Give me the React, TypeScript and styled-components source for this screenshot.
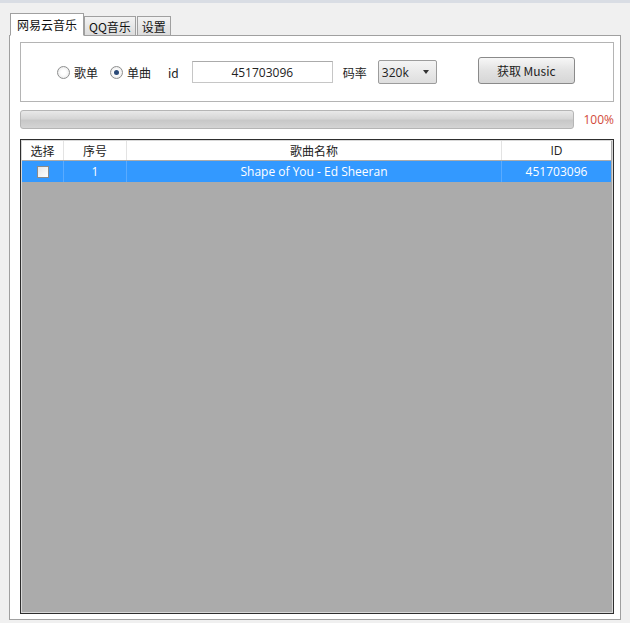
import React from 'react';
import styled, { createGlobalStyle } from 'styled-components';

const GlobalStyle = createGlobalStyle`
  html, body {
    margin: 0;
    padding: 0;
    background: #f0f0f0;
  }
  body {
    font-family: "Noto Sans CJK SC", "Noto Sans", sans-serif;
    font-size: 12px;
    color: #222;
  }
`;

const Window = styled.div`
  height: 623px;
  box-sizing: border-box;
  border-top: 3px solid #d9dde4;
  padding: 10px 9px 3px 9px;
  display: flex;
  flex-direction: column;
`;

const TabStrip = styled.div`
  display: flex;
  align-items: flex-end;
  height: 23px;
  padding-left: 1px;
  margin-bottom: -1px;
  position: relative;
  z-index: 1;
`;

const Tab = styled.div<{ $active?: boolean }>`
  box-sizing: border-box;
  height: ${p => (p.$active ? '23px' : '20px')};
  padding: 0 ${p => (p.$active ? '6px' : '4px')};
  margin-right: ${p => (p.$active ? '0' : '1px')};
  border: 1px solid #a0a0a0;
  border-bottom: ${p => (p.$active ? '1px solid #fff' : '1px solid #a0a0a0')};
  background: ${p => (p.$active ? '#fff' : 'linear-gradient(#f3f3f3, #dcdcdc)')};
  display: flex;
  align-items: center;
  font-size: 12px;
  color: #111;
`;

const Panel = styled.div`
  flex: 1;
  background: #fff;
  border: 1px solid #a0a0a0;
  padding: 6px 6px 5px 10px;
  display: flex;
  flex-direction: column;
`;

const GroupBox = styled.div`
  height: 60px;
  box-sizing: border-box;
  border: 1px solid #b4b4b4;
  display: flex;
  align-items: center;
  padding-left: 36px;
`;

const Radio = styled.span<{ $checked?: boolean }>`
  width: 11px;
  height: 11px;
  border-radius: 50%;
  border: 1px solid #8e8f8f;
  background: radial-gradient(circle, #fff 30%, #e2e2e2 100%);
  display: inline-flex;
  align-items: center;
  justify-content: center;
  margin-right: 4px;
  &::after {
    content: '';
    display: ${p => (p.$checked ? 'block' : 'none')};
    width: 5px;
    height: 5px;
    border-radius: 50%;
    background: #2b4a78;
  }
`;

const Label = styled.span<{ $gap?: number }>`
  margin-right: ${p => p.$gap ?? 0}px;
  color: #222;
`;

const TextBox = styled.div`
  width: 141px;
  height: 22px;
  box-sizing: border-box;
  border: 1px solid #c6c6c6;
  border-top-color: #ababab;
  display: flex;
  align-items: center;
  justify-content: center;
  font-family: "Open Sans", "Noto Sans", sans-serif;
  font-size: 12px;
  margin-right: 10px;
`;

const Select = styled.div`
  width: 59px;
  height: 24px;
  box-sizing: border-box;
  border: 1px solid #9c9c9c;
  border-radius: 2px;
  background: linear-gradient(#f4f4f4, #dedede);
  display: flex;
  align-items: center;
  justify-content: space-between;
  padding: 0 7px 0 3px;
  font-family: "Open Sans", "Noto Sans", sans-serif;
  font-size: 12px;
  margin: 0 41px 0 11px;
  &::after {
    content: '';
    border-left: 3px solid transparent;
    border-right: 3px solid transparent;
    border-top: 4px solid #333;
  }
`;

const Button = styled.div`
  width: 97px;
  height: 27px;
  box-sizing: border-box;
  border: 1px solid #8a8a8a;
  border-radius: 3px;
  background: linear-gradient(#f7f7f7, #e2e2e2 50%, #d6d6d6);
  display: flex;
  align-items: center;
  justify-content: center;
  font-size: 12px;
  margin-top: -3px;
`;

const ProgressRow = styled.div`
  display: flex;
  align-items: center;
  margin-top: 7px;
  height: 20px;
`;

const ProgressBar = styled.div`
  width: 556px;
  height: 19px;
  box-sizing: border-box;
  border: 1px solid #b5b5b5;
  border-radius: 3px;
  background: linear-gradient(#e9e9e9, #d6d6d6 45%, #c8c8c8 55%, #d4d4d4);
`;

const Percent = styled.span`
  margin-left: 9px;
  color: #d24a3a;
  font-family: "Open Sans", "Noto Sans", sans-serif;
  font-size: 12px;
`;

const Table = styled.div`
  flex: 1;
  margin-top: 10px;
  border: 1px solid #2e2e2e;
  box-shadow: inset 0 0 0 1px #d8d8d8;
  background: #ababab;
  padding: 1px;
  display: flex;
  flex-direction: column;
`;

const Row = styled.div<{ $header?: boolean; $selected?: boolean }>`
  display: grid;
  grid-template-columns: 42px 63px 375px 1fr;
  height: ${p => (p.$header ? '19px' : '21px')};
  margin-top: ${p => (p.$header ? '0' : '1px')};
  background: ${p => (p.$header ? '#fff' : p.$selected ? '#3399ff' : '#fff')};
  color: ${p => (p.$selected ? '#fff' : '#222')};
  margin-right: 1px;
`;

const Cell = styled.div<{ $header?: boolean }>`
  display: flex;
  align-items: center;
  justify-content: center;
  border-right: 1px solid ${p => (p.$header ? '#e3e3e3' : '#5aabff')};
  font-family: "Open Sans", "Noto Sans", "Noto Sans CJK SC", sans-serif;
  font-size: 12px;
  &:last-child {
    border-right: none;
  }
`;

const Check = styled.span`
  width: 10px;
  height: 10px;
  border: 1px solid #8a8a8a;
  background: linear-gradient(135deg, #e6e6e6, #ffffff);
`;

const headers = ['选择', '序号', '歌曲名称', 'ID'];

const songs = [{ no: 1, name: 'Shape of You - Ed Sheeran', id: '451703096' }];

export default function App() {
  return (
    <>
      <GlobalStyle />
      <Window>
        <TabStrip>
          <Tab $active>网易云音乐</Tab>
          <Tab>QQ音乐</Tab>
          <Tab>设置</Tab>
        </TabStrip>
        <Panel>
          <GroupBox>
            <Radio />
            <Label $gap={12}>歌单</Label>
            <Radio $checked />
            <Label $gap={17}>单曲</Label>
            <Label $gap={13}>id</Label>
            <TextBox>451703096</TextBox>
            <Label>码率</Label>
            <Select>320k</Select>
            <Button>获取 Music</Button>
          </GroupBox>
          <ProgressRow>
            <ProgressBar />
            <Percent>100%</Percent>
          </ProgressRow>
          <Table>
            <Row $header>
              {headers.map(h => (
                <Cell key={h} $header>
                  {h}
                </Cell>
              ))}
            </Row>
            {songs.map(s => (
              <Row key={s.id} $selected>
                <Cell>
                  <Check />
                </Cell>
                <Cell>{s.no}</Cell>
                <Cell>{s.name}</Cell>
                <Cell>{s.id}</Cell>
              </Row>
            ))}
          </Table>
        </Panel>
      </Window>
    </>
  );
}
